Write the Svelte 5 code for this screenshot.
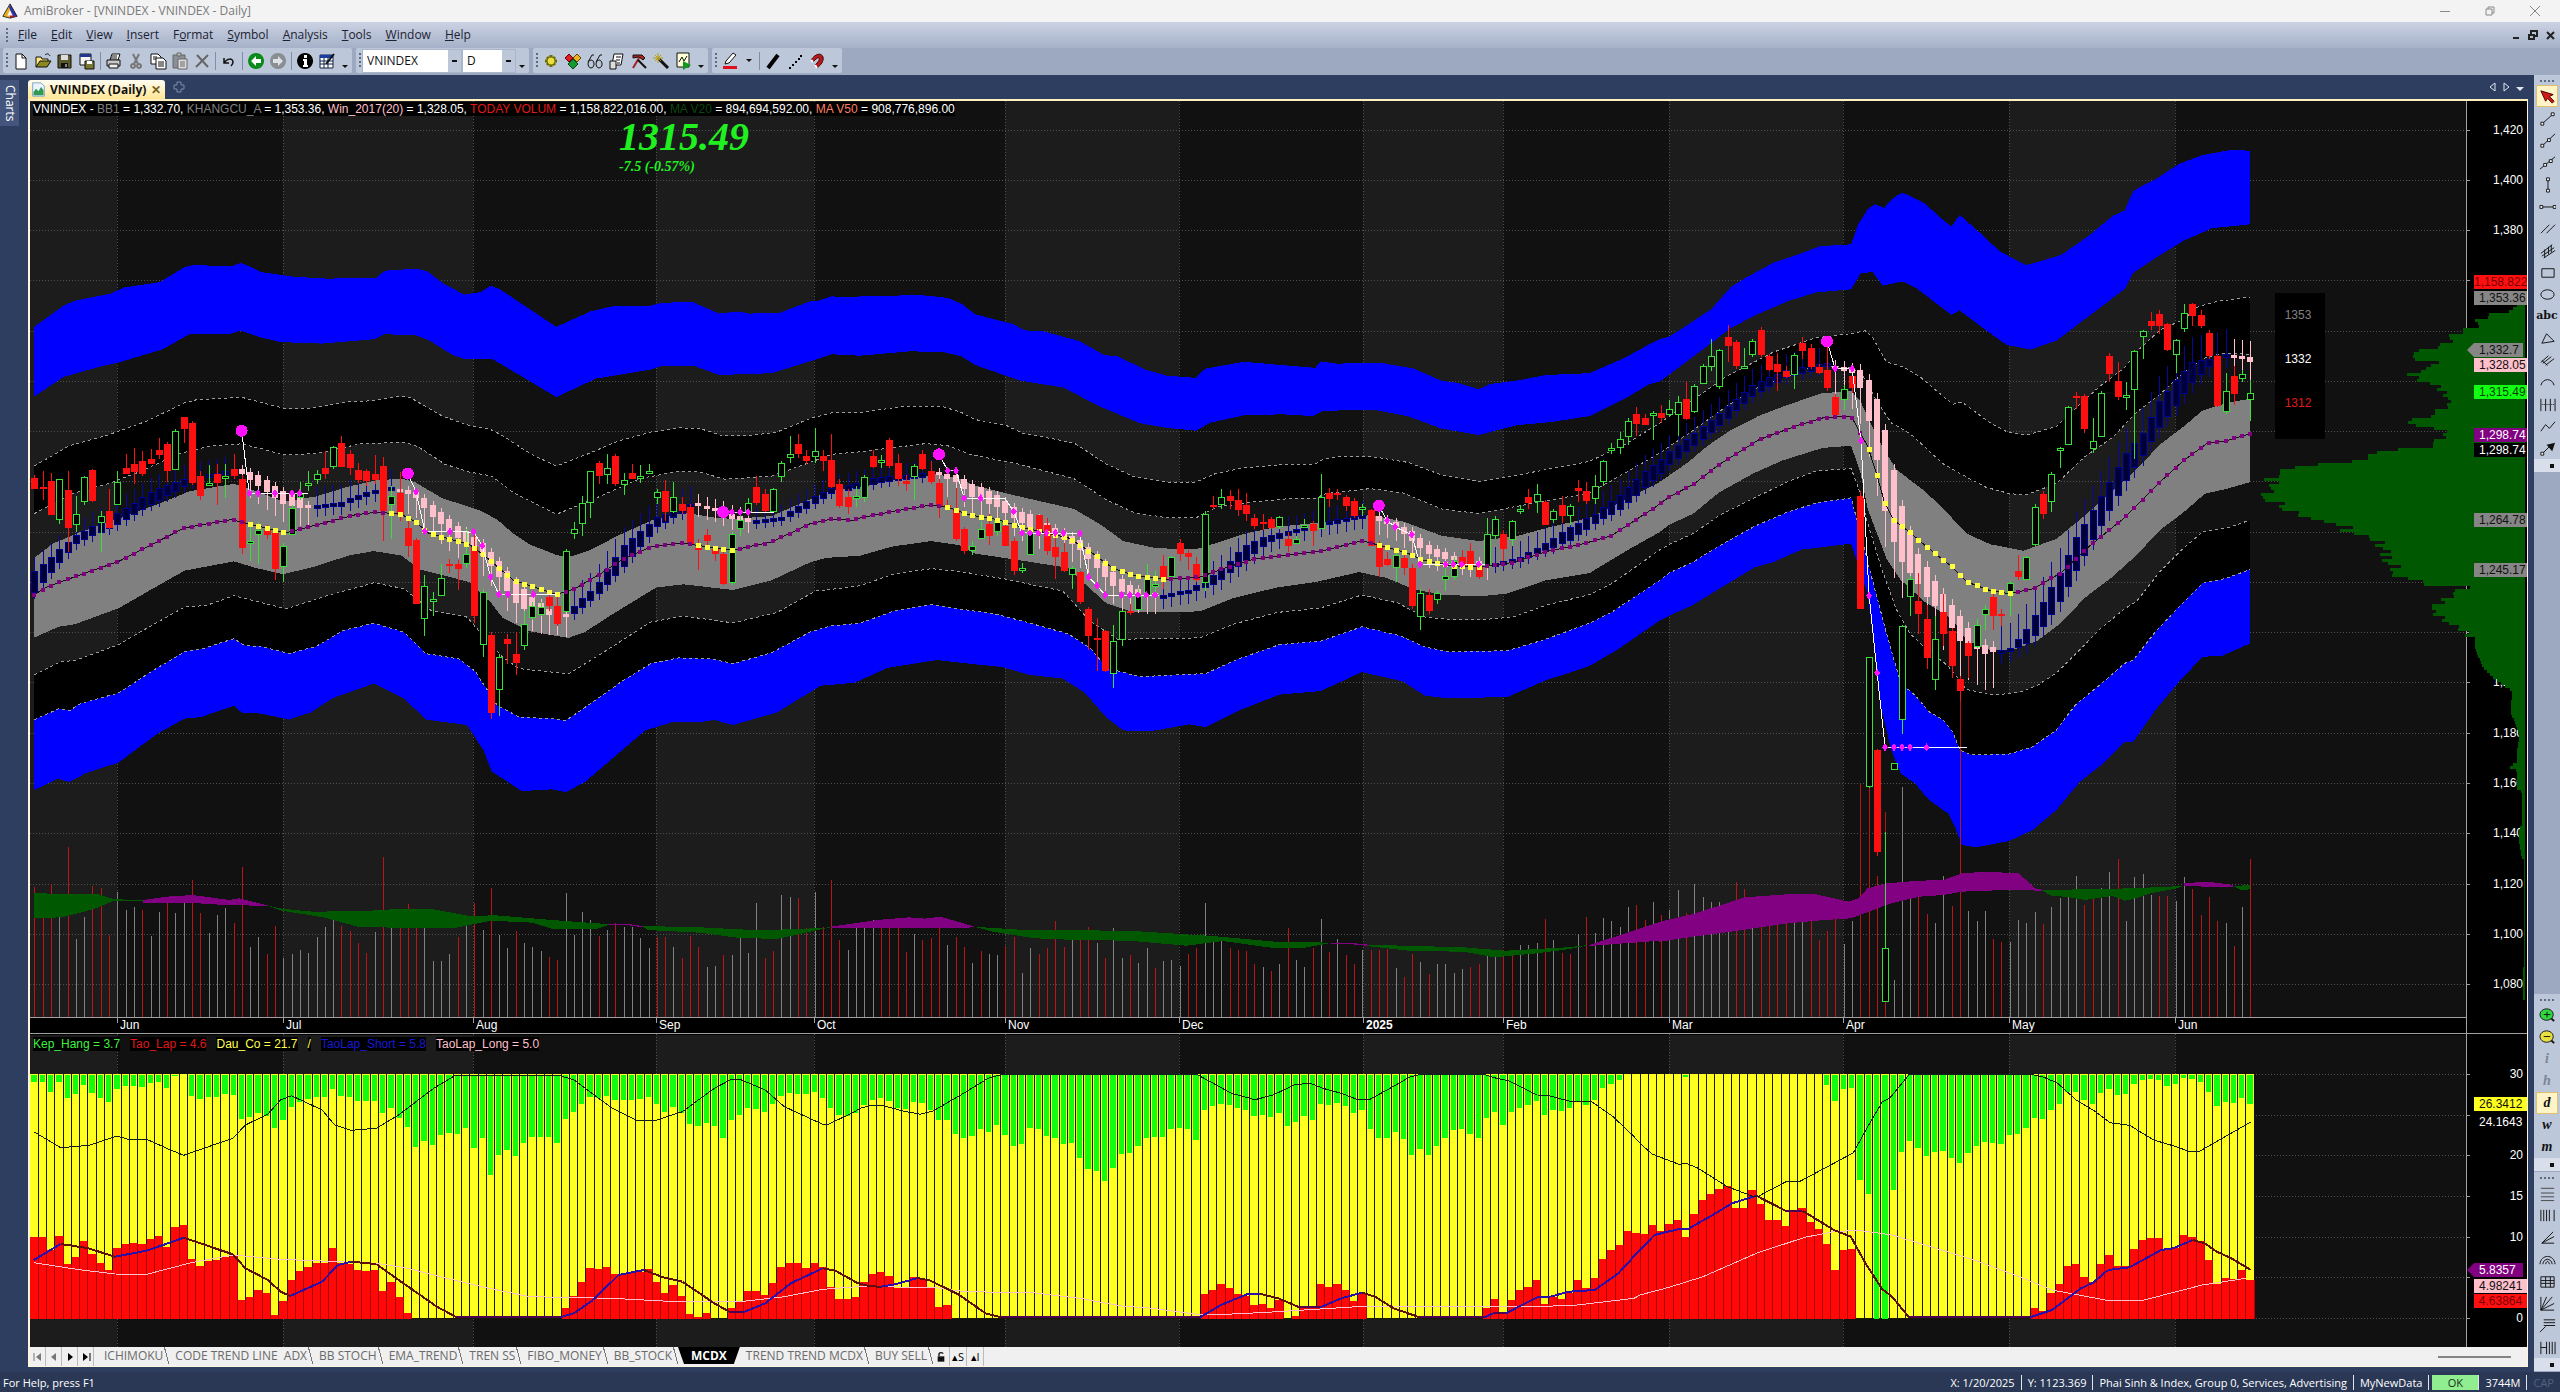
<script lang="ts">
    type Point = [number, number];
    type Shape = { d: string; f?: string; s?: string; w?: number };

    /** Recorded points come in blocks, every block with its own origin and scale. */
    function block(ox: number, oy: number, kx: number, ky: number) {
        return (text: string): Point[] =>
            text.split(' ').map((pair) => {
                const [u, v] = pair.split(',').map(Number);
                return [ox + u / kx, oy + v / ky];
            });
    }
    const west = block(20, 250, 1.8233, 2.8);
    const mid = block(860, 250, 1.8233, 2.8);
    const east = block(1660, 130, 2.119, 2.8);
    const deep = block(1660, 560, 2.119, 3);
    const volWest = block(20, 840, 0.956, 3);
    const flowWest = block(0, 1020, 1.568, 3);
    const flowMid = block(860, 1050, 1.912, 3);
    const flowEast = block(1640, 1050, 2.063, 3);
    const axisTop = block(2380, 60, 3, 2.376);
    const axisLow = block(2380, 700, 3, 2.266);

    const barX = (i: number) => 34.3 + 8.3 * i;
    const r = (n: number) => Math.round(n * 10) / 10;
    const line = (pts: Point[]) => 'M' + pts.map((p) => `${r(p[0])} ${r(p[1])}`).join('L');
    const area = (a: Point[], b: Point[]) => line([...a, ...[...b].reverse()]) + 'Z';

    function valueAt(pts: Point[], x: number) {
        if (x <= pts[0][0]) return pts[0][1];
        for (let i = 1; i < pts.length; i++) {
            const [x0, y0] = pts[i - 1];
            const [x1, y1] = pts[i];
            if (x <= x1) return x1 === x0 ? y1 : y0 + ((y1 - y0) * (x - x0)) / (x1 - x0);
        }
        return pts[pts.length - 1][1];
    }

    // price pane frame
    const LEFT = 30;
    const WIDTH = 2497;
    const TOP = 101;
    const HEIGHT = 933;
    const LOW_TOP = 1034;
    const LOW_HEIGHT = 313;
    const AXIS = 2466;
    const BASE = 1017;

    const pctX = (x: number) => ((x - LEFT) / WIDTH) * 100;
    const pctY = (y: number) => ((y - TOP) / HEIGHT) * 100;
    const pctLow = (y: number) => ((y - LOW_TOP) / LOW_HEIGHT) * 100;
    const priceY = (p: number) => 129.6 + (1420 - p) * 2.513;
    const flowY = (v: number) => 1318 - v * 8.133;

    const months = [
        { x: 117, name: 'Jun' },
        { x: 283, name: 'Jul' },
        { x: 473, name: 'Aug' },
        { x: 656, name: 'Sep' },
        { x: 814, name: 'Oct' },
        { x: 1005, name: 'Nov' },
        { x: 1179, name: 'Dec' },
        { x: 1363, name: '2025', year: true },
        { x: 1503, name: 'Feb' },
        { x: 1669, name: 'Mar' },
        { x: 1843, name: 'Apr' },
        { x: 2009, name: 'May' },
        { x: 2175, name: 'Jun' }
    ];
    const stripes = [LEFT, ...months.map((m) => m.x)].map((x, i, all) => ({
        x,
        w: (all[i + 1] ?? AXIS) - x,
        fill: i % 2 ? '#111111' : '#1c1c1c'
    }));
    const prices = Array.from({ length: 18 }, (_, i) => 1420 - 20 * i);
    const flows = [30, 25, 20, 15, 10, 5, 0];
    // the tags and the profile take the place of the labels in between
    const priceLabels = prices.filter((p) => p >= 1380 || p <= 1200);
    const flowLabels = flows.filter((v) => v !== 25 && v !== 5);

    // envelopes, from the top one down
    const blueTop = [
        ...west('26,215 80,155 100,142 165,122 190,105 255,90 300,48 315,42 385,46 403,36 425,50 440,62 500,75 560,80 650,78 665,58 725,52 745,62 770,92 810,125 840,118 858,100 875,110 978,215 1040,172 1080,158 1150,156 1170,148 1225,145 1275,178 1310,172 1330,178 1385,176 1440,144 1455,142 1480,130 1520,133'),
        ...mid('0,130 110,126 160,134 185,150 210,180 280,208 300,225 335,228 400,255 445,294 470,298 520,335 560,352 612,358 630,332 700,313 830,330 840,312 870,318 950,316 1010,332 1060,366 1090,372 1128,390 1150,375 1200,365 1250,350 1330,345 1390,305 1430,272 1458,250'),
        ...east('20,578 60,545 90,518 110,500 150,440 180,415 240,372 300,345 340,325 405,320 420,265 440,222 455,208 475,218 495,190 513,175 530,185 560,205 600,252 618,270 635,238 680,290 720,340 775,378 800,370 850,350 910,295 960,240 985,225 1003,170 1050,138 1100,95 1150,70 1210,56 1251,58')
    ];
    const blueTopIn = [
        ...west('26,410 80,355 150,325 180,315 260,278 310,235 385,234 403,226 440,245 475,258 550,262 645,250 665,236 720,238 745,252 790,295 810,305 860,305 880,322 978,412 1050,360 1150,335 1170,325 1230,325 1275,350 1370,345 1440,312 1480,292'),
        ...mid('0,296 90,284 150,285 185,298 210,322 290,365 370,385 440,440 510,485 560,498 612,506 640,483 700,463 770,460 825,465 845,450 940,448 1000,466 1060,500 1128,518 1200,490 1260,482 1330,465 1400,412 1440,375 1458,369'),
        ...east('60,645 150,555 200,520 270,480 330,455 405,446 425,402 450,397 472,436 513,424 540,440 590,490 618,518 635,505 690,560 735,602 785,615 840,590 900,530 940,490 985,445 1003,400 1060,350 1110,310 1170,275 1251,264')
    ];
    const blackTop = [
        ...west('26,605 90,548 160,518 230,480 300,428 320,420 403,412 485,445 530,443 600,425 645,422 685,410 710,412 770,465 820,492 855,500 880,520 930,570 978,605 1040,568 1090,535 1150,510 1200,498 1240,500 1280,520 1330,520 1380,510 1440,472 1480,456'),
        ...mid('0,455 80,438 150,438 185,455 210,475 265,490 295,512 390,540 450,600 500,635 560,650 612,650 650,625 700,610 780,600 830,600 845,585 880,578 940,580 1000,595 1060,630 1128,648 1200,630 1260,612 1330,592 1400,540 1458,485'),
        ...east('60,765 140,690 200,650 240,622 330,582 405,570 435,562 450,580 480,650 515,663 550,690 620,768 640,762 700,820 735,845 775,855 840,830 880,780 930,720 985,665 1010,620 1060,560 1110,530 1140,495 1180,480 1251,468')
    ];
    const blackTopIn = [
        ...west('26,738 95,682 160,655 220,620 290,570 350,548 403,543 440,556 480,574 540,570 620,543 700,538 725,550 775,600 820,622 860,633 900,680 978,740 1050,695 1130,640 1200,620 1240,622 1285,642 1370,633 1440,595 1480,572'),
        ...mid('0,565 120,542 160,548 200,572 290,600 390,640 450,700 500,735 560,750 612,750 650,720 720,705 790,695 830,695 850,682 930,668 990,680 1060,725 1128,738 1190,720 1260,700 1330,680 1400,620 1458,569'),
        ...east('60,850 140,775 200,725 270,690 330,660 405,665 430,690 460,760 490,820 530,850 600,935 640,965 690,1000 740,1018 775,1022 840,990 900,915 960,860 1010,790 1060,740 1100,690 1150,640 1190,625 1251,628')
    ];
    const grayTop = [
        ...west('26,862 60,822 110,790 180,752 250,712 310,675 390,655 440,680 480,705 540,690 600,662 650,645 695,640 720,650 770,695 840,730 870,755 900,795 930,825 980,855 1005,858 1040,840 1090,800 1150,758 1210,735 1270,750 1300,753 1370,745 1430,705 1480,672'),
        ...mid('0,665 60,645 140,628 180,640 210,660 290,690 390,725 440,770 480,815 540,835 612,838 650,820 700,795 760,775 860,760 930,742 990,760 1060,800 1128,815 1200,800 1260,775 1330,750 1400,695 1458,650'),
        ...east('60,930 100,885 150,840 210,800 270,770 340,738 405,730 425,760 460,860 500,950 560,1010 600,1060 650,1130 700,1160 770,1178 840,1145 900,1080 960,1010 1010,950 1060,880 1110,830 1150,785 1200,765 1251,752')
    ];
    const middle = [
        ...west('26,965 50,943 100,915 150,888 180,872 210,848 300,778 385,755 415,766 485,792 560,762 610,742 650,734 695,740 720,760 745,793 820,825 850,860 900,925 978,964 1010,950 1060,905 1100,865 1150,832 1205,820 1240,828 1300,840 1370,818 1440,767 1480,753 1520,757'),
        ...mid('0,750 60,732 130,714 160,720 200,742 250,755 300,778 380,806 420,845 460,890 500,912 560,922 620,916 670,888 720,865 790,853 850,840 915,814 960,832 1000,850 1030,870 1080,884 1128,888 1190,875 1250,845 1320,822 1370,800 1450,720'),
        ...east('20,1027 70,993 125,937 210,867 290,828 345,806 405,801 425,850 440,885 458,958 475,1040 495,1092 530,1127 565,1167 618,1222 650,1265 700,1290 740,1298 790,1285 850,1240 910,1165 985,1085 1060,985 1110,925 1160,877 1200,870 1251,850')
    ];
    const grayLow = [
        ...west('26,1085 70,1055 100,1048 180,1003 240,950 300,898 390,872 430,890 480,908 540,885 600,855 645,843 695,855 730,895 820,930 860,990 880,1030 930,1068 1000,1086 1030,1070 1080,1020 1160,945 1210,936 1300,952 1370,925 1440,875 1470,862'),
        ...mid('0,856 60,830 130,815 180,826 210,850 280,866 380,890 410,935 450,990 500,1015 620,1012 680,975 760,945 830,930 910,902 960,918 1010,950 1060,965 1128,970 1180,962 1250,925 1330,905 1400,840 1458,790'),
        ...east('20,1105 70,1075 125,1015 200,960 260,925 345,890 405,884 425,960 440,1060 480,1200 510,1260 560,1320 620,1370 650,1430 700,1456 750,1455 800,1430 850,1380 900,1310 960,1250 1010,1190 1060,1120 1110,1070 1155,1018 1200,1005 1251,986')
    ];
    const blackLow = [
        ...west('26,1190 75,1152 100,1150 180,1105 230,1060 300,1000 340,995 390,968 485,1005 560,968 645,932 700,948 750,1010 815,1028 850,1090 880,1140 910,1172 1000,1187 1060,1130 1150,1042 1210,1025 1300,1044 1380,1015 1450,955 1510,945'),
        ...mid('0,940 60,908 130,892 190,902 260,920 370,955 420,1040 470,1090 620,1086 680,1048 760,1015 840,1002 915,966 980,988 1030,1028 1080,1035 1128,1036 1190,1028 1250,995 1330,965 1370,935 1458,840'),
        ...east('20,1160 70,1130 125,1080 200,1030 270,985 330,955 405,948 420,1000 440,1100 470,1230 500,1340 530,1410 570,1460 610,1500 650,1567 710,1582 760,1575 800,1555 840,1520 890,1455 930,1400 985,1340 1010,1320 1060,1235 1110,1170 1150,1125 1200,1115 1251,1092')
    ];
    const blueLow = [
        ...west('26,1315 70,1285 90,1290 110,1270 180,1240 240,1180 300,1125 330,1118 390,1088 410,1108 440,1110 490,1130 540,1110 590,1065 645,1045 700,1070 740,1130 800,1145 830,1180 870,1275 910,1308 970,1312 995,1318 1040,1270 1100,1205 1150,1158 1200,1142 1260,1145 1300,1158 1370,1128 1440,1070 1480,1052'),
        ...mid('0,1045 60,1012 130,993 180,1005 250,1020 310,1045 380,1075 420,1115 450,1170 510,1195 570,1190 630,1186 690,1145 765,1105 840,1095 915,1055 985,1080 1030,1112 1075,1125 1180,1122 1250,1090 1330,1045 1370,1015 1458,925'),
        ...east('20,1240 70,1210 125,1165 200,1110 270,1070 330,1045 405,1030 425,1130'),
        ...deep('450,60 480,220 510,370 540,405 570,455 600,480 620,515 635,570 660,585 740,582 790,560 840,510 880,435 940,365 985,310 1003,300 1050,215 1100,140 1150,70 1200,55 1251,28')
    ];
    const blueLowOut = [
        ...west('26,1512 70,1480 90,1490 120,1465 180,1435 250,1355 300,1312 330,1308 390,1276 405,1296 440,1298 490,1315 530,1295 570,1255 645,1214 700,1255 740,1315 815,1330 845,1400 860,1460 915,1515 970,1510 995,1518 1030,1490 1140,1345 1190,1322 1240,1322 1265,1316 1300,1330 1380,1295 1460,1220 1520,1212'),
        ...mid('0,1205 50,1170 140,1148 210,1160 260,1168 310,1190 370,1200 410,1240 450,1310 480,1345 530,1348 600,1328 630,1336 690,1290 765,1245 840,1235 915,1182 990,1208 1030,1248 1070,1255 1180,1252 1250,1205 1330,1165 1380,1120 1458,1038'),
        ...east('20,1360 70,1330 125,1285 200,1225 240,1210 300,1175 405,1158'),
        ...deep('440,100 470,450 490,570 510,640 540,670 570,720 610,760 625,800 640,855 670,862 740,843 790,810 840,750 890,665 940,610 985,545 1003,545 1050,450 1100,365 1150,290 1190,288 1251,250')
    ];
    const dashed = [blackTop, blackTopIn, blackLow, blueLow].map(line);

    // body top, body bottom, high, low
    const candleText: [number, number, string][] = [
        [0, 250, 'r638,668,630,670 r664,670,618,700 r648,742,625,742 g642,752,640,768 r672,778,618,845 g738,766,690,790 g636,704,632,715 r616,702,612,706 g744,762,732,846 r731,778,668,782 g650,710,620,710 r610,626,572,628 r598,622,555,655 r590,626,562,632 r584,598,558,600 r560,575,526,585 r543,618,538,650 g508,614,502,614 r468,500,468,540 r484,652,480,658 r632,688,620,700 g652,655,602,660 r626,652,600,715 g633,636,600,695 r612,632,572,640 r640,834,630,850 g815,818,762,870 g783,795,762,880 r784,798,770,810 r792,894,780,925 g828,885,820,930 g722,796,715,798 g683,692,650,700 g652,656,620,676 g628,640,615,655 r610,626,562,640 g552,606,550,612 r540,608,522,608 r570,610,560,630 r616,644,595,652 r620,646,612,660 r626,644,575,656 r605,730,580,815 g690,710,660,808 r680,742,622,760 r778,828,760,860 r812,990,806,990 g942,1030,910,1080 g978,984,958,1026 g918,966,880,970 r878,882,865,905 r880,894,868,952 g852,875,780,890 r832,1024,790,1044 g958,1102,950,1140 r1078,1296,1070,1312 g1140,1230,1130,1305 r1090,1102,1075,1160 r1130,1156,1070,1190 g1048,1105,1010,1120 g998,1028,985,1036 g1000,1020,985,1025 r972,996,960,1010 r996,1046,960,1052 g842,1010,838,1012 g780,792,762,810 g708,765,690,800 g620,706,618,750 r596,634,590,655 g610,628,570,655 r578,654,572,660 g644,655,625,685 r624,640,600,640 g633,636,602,652 g620,623,600,628 g678,692,668,712 r674,734,645,760 g692,732,650,735 r712,730,692,740 r720,824,712,830 r834,838,810,895 r798,816,780,825 r838,850,830,870 r852,936,845,938 g796,930,790,938 g756,778,730,800 g708,730,695,742 r664,708,632,715 r684,732,668,735 g670,732,665,735 g596,634,590,650 g570,580,520,595 r543,572,515,582 r578,592,560,600 g564,576,498,596 r578,592,560,620 r588,664,515,665 r655,716,642,722 r692,720,670,740 g690,694,660,720'],
        [100, 250, 'g636,692,630,705 r578,608,560,610 g588,594,575,610 r532,606,526,610 r596,642,570,660 r648,654,630,675 g604,632,600,700 r572,612,560,616 r620,650,590,655 r652,716,640,750 r714,720,700,725 r728,808,665,815 r782,842,775,850 g830,840,815,855 g780,805,760,805 r768,800,740,825 g758,788,750,800 r774,828,762,830 r814,898,805,910 g890,896,875,905 g786,850,780,855 r742,786,742,800 r770,842,750,855 r832,860,800,920 r846,898,820,902 g890,908,885,950 r902,986,898,990 r1004,1082,1000,1120 r1085,1090,1030,1180 r1068,1178,1065,1182 g1096,1185,1050,1225 g1012,1090,1008,1110 r1010,1016,990,1022 g968,1005,950,1008 g922,965,880,968 g935,938,900,960 r886,920,855,950 g860,912,856,915 r820,852,808,870 r848,860,840,895 r880,925,860,930 g738,930,730,955 r714,718,690,725 g692,710,668,725 r690,704,672,725 r700,728,670,745 r714,738,680,760 r750,774,740,780 r762,765,738,785 r753,778,748,780 g748,772,744,780 r810,828,790,845 g810,820,800,822 g770,774,752,778 r768,788,760,830 g692,778,628,782 r680,698,665,720 r680,684,668,700 r692,716,685,730 r702,745,695,750 g720,725,710,745 r728,828,725,830 r825,888,815,915 r866,882,845,885 g855,888,840,930 r862,890,850,910 r890,998,880,1005 g960,1026,950,1064 r966,1010,950,1020 g960,978,955,990 g912,920,890,955 g870,912,860,925 r860,885,840,890 r842,886,820,890 r888,916,870,920 g794,885,750,888 g752,798,745,808 r795,838,785,870 g758,808,755,830 g724,730,715,740 r692,708,670,725 g683,704,655,735 r706,770,700,770 g732,752,725,765 r714,745,690,765 g718,742,710,770 r666,676,645,705 r674,702,650,710 g660,695,630,710 g590,648,588,660 g555,560,540,570 g530,552,510,570 g478,520,470,545 r460,488,440,520 r470,490,460,490 g456,460,450,532 r457,470,435,485 g444,460,420,465 g426,460,410,520 r418,474,370,475 g382,452,375,455 g326,372,320,375 g296,326,250,340'],
        [203, 130, 'g616,716,614,726 r580,606,545,650 r594,660,588,668 g660,664,610,670 g590,626,585,635 r560,630,552,635 r632,672,628,676 r656,678,625,732 r674,692,660,695 g630,682,625,725 r596,620,580,640 r610,664,600,668 r664,680,655,682 r672,722,600,730 r748,798,740,805 g724,754,715,785 r690,722,680,735 r1026,1340,1010,1342 g1475,1837,1475,1843 r1736,2022,1734,2033 g2290,2438,1965,2440 g1771,1788,1771,1788 g1390,1648,1385,1690 g1256,1306,1250,1362 r1320,1354,1240,1410 r1370,1477,1330,1510 g1426,1536,1360,1568 r1350,1412,1300,1445 r1402,1501,1395,1535 r1538,1570,1530,1600 r1436,1474,1430,1535 g1385,1445,1370,1450 g1342,1356,1330,1400 r1308,1360,1295,1400 r1355,1362,1340,1390 g1268,1298,1262,1360 r1236,1252,1190,1260 g1196,1256,1192,1260 g1056,1158,1048,1165 r1020,1075,1012,1090 g962,1038,958,1070 g890,896,888,945 g776,878,774,882 r745,750,734,780 r744,836,738,848 g872,890,805,905 g736,856,730,860 r632,684,624,705 r703,748,650,755 g743,747,705,785 g618,726,615,920 g564,578,560,640 r536,550,510,560 r515,550,505,570 r543,616,540,620 g588,628,585,680 g513,555,488,565 r488,522,485,550 r518,550,505,555 r568,634,560,640 r634,772,630,775 g732,788,680,795 r690,738,660,770 g684,695,672,705 g735,752,700,815']
    ];
    const candles = candleText.flatMap(([start, oy, text]) =>
        text.split(' ').map((item, k) => {
            const [top, bottom, high, low] = item.slice(1).split(',').map((v) => Math.round(oy + Number(v) / 2.8));
            return { x: Math.round(barX(start + k)), up: item[0] === 'g', top, bottom: Math.max(bottom, top + 2), high, low };
        })
    );

    // trend candles: tone, reach of the wicks, body top, body bottom
    const trends: [string, number, number, Point[], Point[]][] = [
        ['navy', 14, 7, west('26,900 100,800 180,735 240,675 300,640 390,615'), west('26,958 100,822 180,765 240,710 300,660 330,640 390,622')],
        ['pink', 4, 18, west('404,614 435,630 480,675 510,690 525,715'), west('404,626 435,660 480,712 510,722 525,722')],
        ['navy', 18, 9, west('538,716 585,705 640,672 680,664'), west('538,720 585,716 640,684 680,668')],
        ['pink', 4, 20, west('690,668 720,675 750,710 800,775 840,815 870,865 900,920 940,980 970,1010 1000,1020'), west('690,672 720,690 750,745 800,808 840,850 870,905 900,985 920,1005 950,1020 1000,1024')],
        ['navy', 18, 7, west('1006,1002 1050,940 1100,828 1160,748 1225,708'), west('1006,1022 1050,968 1100,885 1160,775 1225,720')],
        ['pink', 9, 11, west('1234,708 1275,725 1300,740 1330,750'), west('1234,713 1275,735 1300,755 1330,762')],
        ['navy', 12, 6, [...west('1340,755 1385,750 1430,705 1480,665 1520,655'), ...mid('22,640 60,632 130,622')], [...west('1340,758 1385,756 1430,725 1480,680 1520,668'), ...mid('22,655 60,645 130,632')]],
        ['pink', 4, 18, mid('142,622 180,632 205,655 250,685 290,730 320,745 370,790 400,810 440,865 470,915 500,945 545,965'), mid('142,628 180,655 205,692 250,720 290,760 330,790 370,808 400,838 440,905 470,955 500,965 545,970')],
        ['navy', 14, 11, mid('550,968 600,950 650,905 700,830 740,800 790,782 850,760 920,740'), mid('550,970 600,960 650,930 700,872 740,820 790,792 850,770 920,748')],
        ['pink', 4, 14, mid('940,742 980,765 1010,790 1040,830 1080,855 1144,878'), mid('940,755 980,778 1010,820 1040,855 1080,868 1144,882')],
        ['navy', 16, 7, [...mid('1155,878 1200,862 1240,828 1290,780 1340,738 1390,680 1430,620 1458,590'), ...east('20,900 100,820 200,710 270,670 360,650')], [...mid('1155,880 1200,872 1240,845 1290,815 1340,765 1390,720 1430,665 1458,628'), ...east('20,935 100,855 200,740 270,690 360,660')]],
        ['pink', 6, 36, east('368,660 407,668 425,672 442,700 460,755 477,840 495,952 512,1052 530,1125 547,1185 565,1222 600,1300 635,1360 653,1395 688,1442 710,1450'), east('368,668 407,680 425,724 442,815 460,925 477,1065 495,1155 512,1210 530,1240 547,1270 565,1308 600,1355 635,1432 653,1438 688,1466 710,1462')],
        ['navy', 25, 11, east('720,1456 741,1450 776,1398 811,1322 846,1242 881,1142 917,1065 952,985 987,905 1022,850 1057,760 1093,700 1128,650 1163,640 1200,628'), east('720,1458 741,1458 776,1438 811,1390 846,1320 881,1235 917,1145 952,1065 987,980 1022,910 1057,832 1093,770 1128,705 1163,660 1200,635')],
        ['pink', 16, 18, east('1212,628 1256,636'), east('1212,634 1256,650')]
    ];
    const trendBars = trends.flatMap(([tone, up, down, a, b]) =>
        Array.from({ length: 268 }, (_, i) => barX(i))
            .filter((x) => x >= a[0][0] - 2 && x <= a[a.length - 1][0] + 2)
            .map((x) => {
                const top = Math.round(valueAt(a, x));
                return { tone, x: Math.round(x), top, h: Math.max(3, Math.round(valueAt(b, x)) - top), up, down };
            })
    );

    const warm = [[247, 287], [388, 560], [698, 735], [946, 1165], [1377, 1486], [1867, 2011]];
    const dots = Array.from({ length: 268 }, (_, i) => {
        const x = barX(i);
        const hot = warm.some(([a, b]) => x >= a && x <= b);
        return { x: Math.round(x), y: Math.round(valueAt(middle, x)), fill: hot ? '#ffff40' : '#800080', size: hot ? 5 : 4 };
    });

    const stops = [
        west('404,506 418,681 525,681'),
        west('707,626 722,677 738,788 827,790 843,828 858,915 873,964 978,964'),
        west('1282,734 1375,734'),
        mid('144,572 160,618 175,618 190,695 265,697 280,732 295,792 400,794 417,916 432,940 447,966 545,967'),
        mid('946,716 961,757 976,776 1006,797 1021,880 1140,880'),
        [...east('354,592 371,668 407,668 426,870 443,1304 460,1520'), ...deep('477,562 651,562')]
    ];
    const gems = [
        ...west('418,681 434,681 465,681 496,681 510,681 722,677 738,788 784,789 827,789 843,828 858,915 873,964 890,964 936,964 1298,734 1313,734 1328,734'),
        ...mid('160,618 175,618 190,695 220,695 280,732 295,792 310,792 325,792 340,792 356,792 371,792 401,794 417,916 432,940 447,966 477,966 492,966 507,966 522,966 538,966 961,757 976,776 1006,797 1021,880 1068,880 1082,880 1097,880 1128,880'),
        ...east('371,668 407,668 426,870 443,1304 460,1520'),
        ...deep('477,562 496,562 513,562 530,562 565,562')
    ];

    const volumeText: [number, number, string][] = [
        [0, 840, 'r140 r190 r132 g205 r22 g298 g230 r138 r145 r285 g155 g210 g202 r210 g288 g215 r180 g218 g190 r120 r218 g278 g225 g205 r250 r82 g320 g292 r342 r258 g355 g343 g330 g340 g292 g262 g222 r258 r272 r310 r340 g275 r52 g265 r240 r192 r260 g265 g362 g362 g342 r290 g258 r190 g270 r145 g285 g325 r272 g308 g320 g333 r350 r360 g158 g285 g215 g240 r288 g270 r250 g262 g262 g295 g325 r292 r290 g322 r355 r288 r320 g380 g378 r345 g345 g290 g338 g188 r355 r332 g165 g172 r175 r265 g155 r260 r120 r300 g330 g265 g265 g240 r265 r262 r262 r335 g282 r300 r295 r230 g315 r292 r320 g368 r332 g342 g345 r318 r290 g398 g325 r342 r325 r242 r322 g292 r300 r260 g308 r355 g265 g355 r345 g368 g325 r385 g362 g360 g378 r342 r325 g188 g288 g295 r325 r330 r332 r372 g380 r392 g372 r265 g360 g380 r325 g238 r335 g297 r345 r372 g330 r330 r330 r328 g385 r412 r342 g365 r402 g372 g372 g398 g388 r382 r372 g330 g330 r330 r345 g315 g315 g308 r237 g300 r340 r342 g282 r230 g278 g235 g242 g262 g200 r195 r240 g185'],
        [196, 560, 'r1066 g1050 g990 r1060 g972 g1010 g1025 g1025 g1028 r966 r988 g1030 r1045 r1033 r1035 r1080 g1050 g1038 r1075 r1140 r1112 r1056 g1152 g1083 r672 r685 r948 r755 g1260 g680 g963 r962 r1062 g1088 g948 r1038 r390 g1053 g1082 g1053 r1138 r1146 g1145 g1080 g1088 g1056 r1092 g1040 g1015 g1012 g948 r1035 r1010 g985 g937 r898 g1084 g950 g942 g1005 r1008 r1007 g1023 g950 r988 r1065 r1012 r1082 g1090 r1158 g1040 r897']
    ];
    const volume = volumeText.flatMap(([start, oy, text]) =>
        text.split(' ').map((item, k) => ({
            x: Math.round(barX(start + k)),
            y: Math.round(oy + Number(item.slice(1)) / 3),
            fill: item[0] === 'r' ? '#b81616' : '#808080'
        }))
    );

    const ribbons: [string, string][] = [
        ['#005800', line(volWest('13,160 75,163 90,178 118,180 118,184 90,182 70,208 40,232 13,235')) + 'Z'],
        ['#820082', line(volWest('118,180 140,170 165,165 200,180 210,175 235,195 250,207 235,197 200,196 170,190 118,188')) + 'Z'],
        ['#005800', line(volWest('235,195 250,206 280,215 330,213 360,207 395,208 430,228 455,226 500,238 530,245 565,253 550,268 510,268 490,248 450,242 415,264 325,262 290,232 250,212')) + 'Z'],
        ['#820082', line(volWest('563,251 580,251 600,260 600,264 580,255 563,255')) + 'Z'],
        ['#005800', line(volWest('595,258 650,262 700,270 740,268 775,262 760,272 725,296 690,295 650,278 600,270')) + 'Z'],
        ['#820082', line(volWest('775,260 820,240 850,232 865,236 880,230 915,262 880,265 775,264')) + 'Z'],
        ['#005800', line(volWest('912,260 960,270 1060,272 1110,282 1140,288 1200,305 1255,308 1225,325 1200,325 1150,303 1115,317 1060,302 1010,300 970,295 930,275')) + 'Z'],
        ['#820082', line(volWest('1253,308 1270,308 1292,315 1292,319 1270,312 1253,312')) + 'Z'],
        ['#005800', line(volWest('1288,314 1380,322 1420,332 1480,322 1502,314 1480,328 1450,340 1410,352 1380,335 1330,333 1290,319')) + 'Z'],
        ['#820082', area([...volWest('1500,315 1540,275 1564,250'), ...deep('0,1085 70,1062 130,1035 180,1012 270,1003 330,1003 400,1025 420,1015 440,985 480,970 550,962 600,960 640,940 690,935 760,940 795,985 812,990')], [...volWest('1500,318 1564,303'), ...deep('0,1145 70,1130 150,1115 270,1090 350,1080 405,1075 480,1035 490,1030 550,1010 600,1005 640,995 690,992 740,990 812,992')])],
        ['#005800', line(deep('808,990 900,988 1000,985 1110,978 1095,985 1040,1000 1000,1018 985,1022 960,1008 900,1020 860,1010 830,1008')) + 'Z'],
        ['#820082', line(deep('1110,970 1160,965 1215,975 1215,980 1160,980 1110,978')) + 'Z'],
        ['#005800', line(deep('1215,978 1251,975 1251,988 1230,990')) + 'Z']
    ];

    // volume-by-price outline, stepped into thin rows
    const profileEdge = [
        ...axisTop('430,580 385,590 320,605 290,625 250,640 215,655 185,675 120,690 75,700 125,710 190,718 100,738 90,744 120,755 150,765 190,785 215,797 190,805 210,815 170,835 75,858 150,868 200,885 180,900 140,915 30,925'),
        ...east('1560,890 1490,903 1530,910 1420,930 1340,940 1310,960 1285,975 1310,985 1268,1028 1330,1040 1300,1050 1345,1065 1400,1095 1470,1105 1450,1115 1480,1130 1530,1150'),
        ...axisTop('0,1155 20,1160 5,1175 35,1180 15,1190 45,1200 30,1215 90,1230 150,1245 265,1250 215,1265 190,1280 180,1290 145,1305 170,1315 210,1330 205,1338 245,1350 285,1370 285,1395 310,1440 340,1465 375,1485 395,1495 395,1515'),
        ...axisLow('393,0 393,25 405,50 418,80 412,110 410,138 385,148 412,158 412,200 425,205 425,280 417,290 417,320 425,350 432,360 430,680')
    ];
    const edgeByY = profileEdge.map(([x, y]): Point => [y, x]);
    const profile = Array.from({ length: 235 }, (_, k) => {
        const y = 304 + k * 3;
        const x = valueAt(edgeByY, y);
        const jut = y < 640 ? ((k * 7) % 5) * 3 - 6 : 0;
        return { x: Math.round(x + jut), y };
    }).filter((row) => row.y < 1000);

    // money flow: bottom of the green column, top of the red one
    const flowText: [number, number, string][] = [
        [0, 0, '185,652 185,652 215,690 185,648 233,732 222,712 195,664 218,702 233,730 247,750 206,684 198,672 198,670 202,672 190,657 186,648 203,680 168,622 166,615 228,718 238,738 231,722 230,720 221,710 225,708 298,840 292,832 280,810 287,820 323,884 300,844 262,780 245,754 237,742 230,730 231,728 206,684 228,730 232,732 242,750 243,752 243,750 278,812 264,785 293,832 320,880 380 362 375 346 338 342 323 383 355 464 405 390 407 370 352 350 350 368 297,865 275,828 253,787 230,744 233,747 228,740 240,762 240,762 240,758 238,755 231,748 252,787 275,820 260,795 278,827 311,882 318,892 308,878 318 353 299,865 285,845 265,812 266,812 275,825 253,790 228,742 218,728 221,730 223,745 217,728 233,742 264,800 284,838 288,838 280,832'],
        [100, 91, '165,695 150,672 143,664 152,676 173,712 175,712 155,680 158,685 178,712 210,770 210,765 250 262 258 235 245 225 255 288 282 232 235 257 262 282 278 322 355 362 392 352 310 308 288 262 260 260 236 232 235 268 178,732 167,720 160,700 165,712 173,732 180,738 197,765 193,760 200,772 187,748 227 216,798 198,770 208,770 160,702 165,710 157,700 168,718 188,752 180,730 235 262 262 245 265 315 295 315 288 264 240 237 250 263 202,773 184,745 225,792 186,748 172,720 164,710 153,690 195,760 178,740 182,745 172,728 155,690 163,712 148,682 113,625 101,600 90,583 72,541 72,549 72,552 72,525 72,543 72,522 72,508 80,561 72,490 72,450 72,430 72,417 72,408 72,472 72,472 72,420 72,460 72,508 72,510 72,528 72,480 72,472 72,516 75,535 104,582 153,660 115,598 113,595 390 430 805 805 418 305 272 293 318 305 303 322 337 308 288 275 278 282 255 252 233 202,773 205,783 178,728 160,700 125,648 125,640 150,680 160,695 128,640 115,615 135,648 132,648 100,595 88,570 86,564 88,564 106,600 102,592 82,555 85,560 96,572 125,628 167,702 155,684 157,685 143,660 160,690']
    ];
    const columns = flowText.flatMap(([start, shift, text]) =>
        text.split(' ').map((item, k) => {
            const [g, red = 896 - shift] = item.split(',').map(Number);
            const x = Math.round(barX(start + k));
            return {
                x,
                w: Math.round(barX(start + k + 1)) - x,
                green: Math.round(1020 + (g + shift) / 3),
                red: Math.round(1020 + (red + shift) / 3)
            };
        })
    );

    const retail = line([
        ...flowWest('53,335 95,383 140,376 183,348 205,360 230,358 265,388 288,406 365,355 385,315 420,282 440,240 457,227 505,270 525,315 550,331 590,325 625,285 680,205 715,165 875,165 900,180 960,265 1000,303 1030,300 1070,275 1120,205 1145,180 1160,178 1200,210 1230,260 1290,313 1300,312 1340,275'),
        ...flowMid('0,175 20,167 45,167 80,182 115,193 140,183 200,128 245,85 270,74 645,74 670,95 710,130 755,149 790,135 830,105 860,99 885,115 920,130 950,148 975,148 1010,118 1050,82 1070,74 1195,74 1215,84 1240,92 1295,135 1315,136 1355,153 1400,156 1440,200 1480,260'),
        ...flowEast('0,280 25,312 80,343 95,340 120,355 180,410 235,440 245,438 300,396 330,394 400,340 440,308 470,230 500,155 515,145 555,74 810,74 830,80 860,98 900,150 940,185 970,218 1010,226 1060,270 1110,292 1130,303 1155,303 1195,270 1260,216')
    ]);
    const shortPts = [
        ...flowWest('53,720 95,672 137,684 180,710 230,692 288,653 365,703 385,745 420,780 440,815 455,828 505,785 530,735 550,725 590,732 625,780 685,860 715,891 880,891 900,880 930,840 970,765 1010,750 1040,772 1070,785 1120,850 1145,877 1165,877 1200,850 1240,790 1290,745 1310,752 1345,790'),
        ...flowMid('20,709 40,710 70,702 110,684 135,692 190,735 240,790 270,802 650,802 690,765 740,733 765,731 800,745 840,772 880,772 920,745 960,728 985,740 1020,775 1070,802 1195,802 1210,790 1235,790 1295,742 1320,740 1355,725 1405,720 1450,670 1485,610'),
        ...flowEast('0,600 30,555 80,537 100,536 150,495 190,460 240,437 300,482 335,482 400,540 435,560 465,640 500,718 520,740 555,802 805,802 850,780 910,715 935,698 965,660 1010,652 1075,600 1100,595 1140,570 1165,580 1190,605 1220,625 1260,660')
    ];
    const shortLines = shortPts.slice(1).map((p, i) => {
        const rise = shortPts[i][1] - p[1];
        return { d: line([shortPts[i], p]), stroke: rise > 0 ? '#2a10a8' : rise < 0 ? '#5c1010' : '#500050' };
    });
    const longLine = line([
        ...flowWest('53,728 120,748 180,762 230,763 300,728 365,705 440,718 590,730 640,745 700,775 760,802 830,830 960,835 1040,843 1170,843 1230,830 1290,808 1345,800'),
        ...flowMid('10,710 140,712 200,725 330,728 420,745 500,768 560,775 640,792 670,795 780,787 950,770 1250,770 1360,767 1480,745'),
        ...flowEast('0,735 60,712 130,680 240,610 340,562 400,545 450,541 520,555 600,590 700,635 800,690 850,720 960,750 1040,750 1080,735 1160,705 1250,685')
    ]);

    const tags = [
        { y: 282, text: '1,158.822', cls: 'red' },
        { y: 298, text: '1,353.36', cls: 'gray' },
        { y: 350, text: '1,332.7', cls: 'gray arrow' },
        { y: 365, text: '1,328.05', cls: 'rose' },
        { y: 392, text: '1,315.49', cls: 'lime' },
        { y: 435, text: '1,298.74', cls: 'purple' },
        { y: 450, text: '1,298.74', cls: 'black' },
        { y: 520, text: '1,264.78', cls: 'gray' },
        { y: 570, text: '1,245.17', cls: 'gray' }
    ];
    const lowTags = [
        { y: 1104, text: '26.3412', cls: 'yellow' },
        { y: 1122, text: '24.1643', cls: 'black' },
        { y: 1270, text: '5.8357', cls: 'purple arrow' },
        { y: 1286, text: '4.98241', cls: 'rose' },
        { y: 1301, text: '4.63864', cls: 'red' }
    ];

    const K = '#111';
    const icons: Record<string, Shape[]> = {
        new: [{ d: 'M4 2h6l4 4v11H4z', f: '#fff', s: K }, { d: 'M10 2v4h4', s: K }],
        open: [{ d: 'M2 15V5h5l1 2h6v3', f: '#ffe680', s: K }, { d: 'M2 15l4-6h11l-4 6z', f: '#8a8a20', s: K }, { d: 'M11 3c2-2 4-1 5 1', s: K }],
        save: [{ d: 'M2 3h13v13H2z', f: '#5a5a2a', s: K }, { d: 'M5 3h7v5H5z', f: '#ddd' }, { d: 'M5 11h7v5H5z', f: K }, { d: 'M10 12v3', s: '#fff' }],
        saveall: [{ d: 'M2 2h11v11H2z', f: '#f4f4f4', s: K }, { d: 'M2 2h11v3H2z', f: '#22368c' }, { d: 'M7 9h9v8H7z', f: '#777733', s: K }, { d: 'M9 9h5v3H9z', f: '#fff' }],
        print: [{ d: 'M5 8l2-6h8l-2 6z', f: '#fff', s: K }, { d: 'M2 8h13v6H2z', f: '#c9c9c9', s: K }, { d: 'M4 12h9v4H4zM7 4h5M6 6h6', f: '#eee', s: K }],
        cut: [{ d: 'M6 2l5 10M12 2L7 12', s: '#777', w: 2 }, { d: 'M6 12a2 2 0 1 0 .1 0zM12 12a2 2 0 1 0 .1 0z', s: '#777', w: 2 }],
        copy: [{ d: 'M2 2h7l3 3v7H2z', f: '#fff', s: K }, { d: 'M7 6h7l3 3v8H7zM9 10h6M9 12h6M9 14h6M4 5h4M4 7h3', f: '#fff', s: K }],
        paste: [{ d: 'M2 3h12v13H2z', f: '#8b8f96', s: '#666' }, { d: 'M6 1h4v3H6z', f: '#bbb', s: '#666' }, { d: 'M7 7h9v10H7zM9 10h5M9 12h5M9 14h5', f: '#ddd', s: '#666' }],
        del: [{ d: 'M4 3l11 12M15 3L3 15', s: '#666', w: 2 }],
        undo: [{ d: 'M4 6v5h5M4 11c3-5 9-5 9-1 0 2-1 3-2 4', s: K, w: 1.5 }],
        back: [{ d: 'M9 1a8 8 0 1 0 .1 0z', f: '#0a8a1a' }, { d: 'M9 4L4 9l5 5v-3h5V7H9z', f: '#fff' }],
        fwd: [{ d: 'M9 1a8 8 0 1 0 .1 0z', f: '#8a8d92' }, { d: 'M9 4l5 5-5 5v-3H4V7h5z', f: '#dde1e8' }],
        info: [{ d: 'M9 1a8 8 0 1 0 .1 0z', f: '#000' }, { d: 'M8 3h3v3H8zM7 7h4v6h1v2H7v-2h1V9H7z', f: '#fff' }],
        sheet: [{ d: 'M2 3h13v13H2z', f: '#fff', s: '#124' }, { d: 'M2 3h13v3H2z', f: '#1a3da0' }, { d: 'M2 9h13M2 12h13M6 6v10M10 6v10', s: '#124' }, { d: 'M8 12l8-10', s: K, w: 2 }],
        gear: [{ d: 'M9 3v12M3 9h12M5 5l8 8M13 5l-8 8', s: '#6b6b00', w: 3 }, { d: 'M9 5a4 4 0 1 0 .1 0z', f: '#e8e040', s: '#6b6b00' }],
        gems: [{ d: 'M5 2l4 4-4 4-4-4z', f: '#e02020', s: '#600' }, { d: 'M13 2l4 4-4 4-4-4z', f: '#e8b020', s: '#640' }, { d: 'M9 7l5 5-5 5-5-5z', f: '#159a30', s: '#042' }],
        glasses: [{ d: 'M5 8a3 4 0 1 0 .1 0zM13 8a3 4 0 1 0 .1 0zM2 10l4-7h2M10 10l4-7h2', s: K }],
        script: [{ d: 'M6 2h9l-2 11H4z', f: '#fff', s: K }, { d: 'M2 9h6v8H2z', f: '#ddd', s: K }, { d: 'M8 5h5M8 8h4M9 11h3', s: K }],
        hammer: [{ d: 'M3 3h9l3 3-2 2-4-3-6 1z', f: '#b02020', s: K }, { d: 'M9 6l-6 10', s: '#a02020', w: 2 }, { d: 'M8 8l8 8', s: K, w: 2 }],
        wand: [{ d: 'M7 7l9 9', s: K, w: 3 }, { d: 'M6 1v10M1 6h10M3 3l6 6M9 3L3 9', s: '#b89c00' }],
        report: [{ d: 'M3 1h12v14H3z', f: '#ffffd8', s: K }, { d: 'M5 10l3-5 2 4 3-5', s: K }, { d: 'M9 9l8 4-8 5z', f: '#109a20' }],
        pen: [{ d: 'M5 9l7-8 3 2-7 8-4 1z', f: '#fff', s: K }, { d: 'M2 14h14v3H2z', f: '#e01020' }],
        stroke: [{ d: 'M4 16L14 3', s: '#000', w: 4 }],
        dotted: [{ d: 'M3 15h2v2H3zM6 12h2v2H6zM9 9h2v2H9zM12 6h2v2h-2zM14 3h2v2h-2z', f: '#000' }],
        magnet: [{ d: 'M3 8c4-6 10-8 12-3 1 4-2 8-6 11l-2-3c3-3 5-5 4-7-1-1-3 1-6 4z', f: '#b81818', s: '#400' }, { d: 'M7 13l2 3M3 8l2 2', s: '#fff', w: 2 }],
        cursor: [{ d: 'M2 3l13 4-4 2 5 5-2 2-5-5-2 3z', f: '#d01818', s: '#400' }],
        seg: [{ d: 'M4 14L14 5', s: K }, { d: 'M2 13h3v3H2zM13 3h3v3h-3z', f: '#fff', s: K }],
        ray: [{ d: 'M3 15L17 2', s: K }, { d: 'M2 13h3v3H2zM9 7h3v3H9z', f: '#fff', s: K }],
        ext: [{ d: 'M1 16L17 3', s: K }, { d: 'M5 10h3v3H5zM11 6h3v3h-3z', f: '#fff', s: K }],
        vert: [{ d: 'M9.500 3v12', s: K }, { d: 'M8 2h3v3H8zM8 14h3v3H8z', f: '#fff', s: K }],
        horiz: [{ d: 'M3 9.500h12', s: K }, { d: 'M1 8h3v3H1zM15 8h3v3h-3z', f: '#fff', s: K }],
        para: [{ d: 'M2 14l9-9M8 14l9-9', s: K }],
        chan: [{ d: 'M2 12l12-9M3 15l13-9M5 17l12-8M6 8v8M10 5v8M13 3v8', s: K }],
        rect: [{ d: 'M3 5h13v9H3z', s: K }],
        oval: [{ d: 'M2 9a7 5 0 1 0 14 0a7 5 0 1 0-14 0z', s: K }],
        tri: [{ d: 'M3 14L8 4l8 8z', s: K }],
        fork: [{ d: 'M2 11l8-7M4 12l9-7M7 14l9-7M3 9l6 5', s: K }],
        arc: [{ d: 'M2 12c2-8 12-8 14 0', s: K }],
        cycle: [{ d: 'M2 3v13M7 3v13M12 3v13M17 3v13', s: K }, { d: 'M3 9h1M5 9h1M8 9h1M10 9h1M13 9h1M15 9h1', s: K }],
        zig: [{ d: 'M2 14l5-7 4 4 6-7', s: K }],
        arrow: [{ d: 'M4 14l7-7', s: K }, { d: 'M2 13h3v3H2z', f: '#fff', s: K }, { d: 'M8 5l9-2-3 9z', f: K }],
        zin: [{ d: 'M8 2a7 6 0 1 0 .1 0z', f: '#30d840', s: K }, { d: 'M5 8h7M8.500 5v6', s: K }, { d: 'M13 12l3 3', s: K, w: 2 }],
        zout: [{ d: 'M8 2a7 6 0 1 0 .1 0z', f: '#e8e040', s: K }, { d: 'M5 8h7', s: K }, { d: 'M13 12l3 3', s: K, w: 2 }],
        hlines: [{ d: 'M2 3.500h14M2 8.500h14M2 12.500h14M2 16.500h14', s: '#444' }],
        vlines: [{ d: 'M2 3v12M5 3v12M8 3v12M11 3v12M16 3v12', s: K }],
        fan: [{ d: 'M3 15L15 3M3 15l13-7M3 15h13', s: K }],
        arcs: [{ d: 'M1 14c1-11 15-11 16 0M4 14c1-7 9-7 10 0M7 14c1-4 3-4 4 0', s: K }],
        grid: [{ d: 'M2 4h14v11H2zM2 8h14M2 11h14M7 4v11M12 4v11', s: K }],
        gann: [{ d: 'M2 2v14h14M2 16L14 2M2 16l14-7M2 16L8 2', s: K }],
        note: [{ d: 'M5 3h12M5 6h12M5 9h12M7 10l-6 6', s: K }],
        bars: [{ d: 'M2 3v13M2 9h6M8 3v13M11 3v13M14 3v13M17 3v13', s: K }],
        lock: [{ d: 'M4 8h10v8H4z', f: K }, { d: 'M6 8V4c0-2 6-2 6 0', s: K, w: 2 }]
    };

    const groups = [
        [['new', 'New'], ['open', 'Open'], ['save', 'Save'], ['saveall', 'Save all'], ['|'], ['print', 'Print'], ['cut', 'Cut'], ['copy', 'Copy'], ['paste', 'Paste'], ['del', 'Delete'], ['|'], ['undo', 'Undo'], ['|'], ['back', 'Back'], ['fwd', 'Forward'], ['|'], ['info', 'Information'], ['sheet', 'Quote editor']],
        [['gear', 'Parameters'], ['gems', 'Insert'], ['glasses', 'Explore'], ['script', 'Formula'], ['hammer', 'Build'], ['wand', 'Wizard'], ['report', 'Backtest']]
    ];
    const drawTools = ['cursor', 'seg', 'ray', 'ext', 'vert', 'horiz', 'para', 'chan', 'rect', 'oval', 'abc', 'tri', 'fork', 'arc', 'cycle', 'zig', 'arrow'];
    const viewTools = ['zin', 'zout', 'i', 'h', 'd', 'w', 'm'];
    const gannTools = ['hlines', 'vlines', 'fan', 'arcs', 'grid', 'gann', 'note', 'bars'];

    const menus = ['File', 'Edit', 'View', 'Insert', 'Format', 'Symbol', 'Analysis', 'Tools', 'Window', 'Help'];
    const hotkeys = [0, 0, 0, 0, 1, 0, 0, 0, 0, 0];
    const sheets = ['ICHIMOKU', 'CODE TREND LINE  ADX', 'BB STOCH', 'EMA_TREND', 'TREN SS', 'FIBO_MONEY', 'BB_STOCK', 'MCDX', 'TREND TREND MCDX', 'BUY SELL'];

    let symbol = $state('VNINDEX');
    let interval = $state('D');
    let activeSheet = $state('MCDX');
</script>

{#snippet icon(name: string)}
    <svg class="icon" viewBox="0 0 18 18" aria-hidden="true">
        {#each icons[name] as p}
            <path d={p.d} fill={p.f ?? 'none'} stroke={p.s ?? 'none'} stroke-width={p.w ?? 1} />
        {/each}
    </svg>
{/snippet}

{#snippet tool(name: string)}
    <button class="tool" class:on={name === 'cursor' || name === 'd'} class:dim={name === 'i' || name === 'h'} aria-label={name}>
        {#if icons[name]}
            {@render icon(name)}
        {:else}
            <span class:abc={name === 'abc'}>{name}</span>
        {/if}
    </button>
{/snippet}

<div class="app">
    <header class="title">
        <svg class="logo" viewBox="0 0 18 18" aria-hidden="true">
            <path d="M9 1L1 15l8 2z" fill="#e8b020" />
            <path d="M9 1l8 14-8 2z" fill="#c01830" />
            <path d="M9 1l8 14-5-1-4-9z" fill="#2038b0" />
            <path d="M9 8l-3 6h6z" fill="#fff" />
            <path d="M9 1l8 14-8 2-8-2z" fill="none" stroke="#222" />
        </svg>
        <span>AmiBroker - [VNINDEX - VNINDEX - Daily]</span>
        <div class="window">
            <button aria-label="Minimize"><svg viewBox="0 0 10 10"><path d="M0 5.500h10" /></svg></button>
            <button aria-label="Restore"><svg viewBox="0 0 10 10"><path d="M1 3h6v6H1zM3 3V1h6v6H7" /></svg></button>
            <button aria-label="Close"><svg viewBox="0 0 10 10"><path d="M0 0l10 10M10 0L0 10" /></svg></button>
        </div>
    </header>

    <nav class="menu">
        <i class="grip"></i>
        {#each menus as name, i}
            <button>{name.slice(0, hotkeys[i])}<u>{name[hotkeys[i]]}</u>{name.slice(hotkeys[i] + 1)}</button>
        {/each}
        <div class="mdi">
            <button aria-label="Minimize chart"><svg viewBox="0 0 10 10"><path d="M2 8h6" /></svg></button>
            <button aria-label="Restore chart"><svg viewBox="0 0 10 10"><path d="M1 5h5v4H1zM3 4V1h6v5H7" /></svg></button>
            <button aria-label="Close chart"><svg viewBox="0 0 10 10"><path d="M2 2l7 7M9 2L2 9" /></svg></button>
        </div>
    </nav>

    <div class="toolbar">
        <div class="group">
            <i class="grip"></i>
            {#each groups[0] as [name, label]}
                {#if name === '|'}
                    <i class="rule"></i>
                {:else}
                    <button class="pick" aria-label={label}>{@render icon(name)}</button>
                {/if}
            {/each}
            <i class="more"></i>
        </div>
        <div class="group">
            <i class="grip"></i>
            <select class="symbol" aria-label="Symbol" bind:value={symbol}><option>VNINDEX</option></select>
            <select class="interval" aria-label="Interval" bind:value={interval}><option>D</option></select>
            <i class="more"></i>
        </div>
        <div class="group">
            <i class="grip"></i>
            {#each groups[1] as [name, label]}
                <button class="pick" aria-label={label}>{@render icon(name)}</button>
            {/each}
            <i class="more"></i>
        </div>
        <div class="group">
            <i class="grip"></i>
            <button class="pick" aria-label="Line colour">{@render icon('pen')}</button>
            <i class="drop"></i>
            <i class="rule"></i>
            {#each ['stroke', 'dotted', 'magnet'] as name}
                <button class="pick" aria-label={name}>{@render icon(name)}</button>
            {/each}
            <i class="more"></i>
        </div>
    </div>

    <main>
        <aside class="side"><button>Charts</button></aside>

        <section class="doc">
            <div class="tabs">
                <div class="tab">
                    <svg class="icon" viewBox="0 0 18 18" aria-hidden="true">
                        <path d="M2 1h10l4 4v12H2z" fill="#e8f4ff" stroke="#6a9ac0" />
                        <path d="M3 12l3-4 3 3 3-5 3 4v6H3z" fill="#2f9a50" />
                    </svg>
                    <b>VNINDEX (Daily)</b>
                    <button aria-label="Close tab">✕</button>
                </div>
                <svg class="plus" viewBox="0 0 12 12" aria-hidden="true"><path d="M4 1h4v3h3v4H8v3H4V8H1V4h3z" /></svg>
                <svg class="nav" viewBox="0 0 36 10" aria-hidden="true">
                    <path d="M6 1v8L1 5zM15 1v8l5-4z" fill="none" />
                    <path d="M27 5h8l-4 4z" class="solid" />
                </svg>
            </div>

            <div class="frame">
                <div class="pane price">
                    <svg class="plot" viewBox="{LEFT} {TOP} {WIDTH} {HEIGHT}" preserveAspectRatio="none" aria-hidden="true">
                        {#each stripes as s}
                            <rect x={s.x} y={TOP} width={s.w} height={BASE - TOP} fill={s.fill} />
                        {/each}
                        {#each prices as p}
                            <path class="dots" d="M{LEFT} {Math.round(priceY(p)) + 0.5}H{AXIS}" />
                        {/each}
                        {#each months as m}
                            <path class="dots" d="M{m.x + 0.5} {TOP}V{BASE}" />
                        {/each}
                        <path d={area(blueTop, blueTopIn)} fill="#0000ff" />
                        <path d={area(blackTop, blackTopIn)} fill="#000" />
                        <path d={area(grayTop, grayLow)} fill="#808080" />
                        <path d={area(blackLow, blueLow)} fill="#000" />
                        <path d={area(blueLow, blueLowOut)} fill="#0000ff" />
                        {#each dashed as d}
                            <path {d} class="dash" />
                        {/each}
                        {#each volume as v}
                            <rect x={v.x} y={v.y} width="1" height={BASE - v.y} fill={v.fill} />
                        {/each}
                        {#each ribbons as [fill, d]}
                            <path {d} {fill} />
                        {/each}
                        {#each trendBars as b}
                            <rect class={b.tone} x={b.x} y={b.top - b.up} width="1" height={b.h + b.up + b.down} />
                            <rect class="{b.tone} body" x={b.x - 3} y={b.top} width="6" height={b.h} />
                        {/each}
                        {#each candles as c}
                            {#if c.up}
                                <path class="up" d="M{c.x + 0.5} {c.high}V{c.top}M{c.x + 0.5} {c.bottom}V{c.low}" />
                                <rect class="up" x={c.x - 2.5} y={c.top + 0.5} width="6" height={c.bottom - c.top} />
                            {:else}
                                <rect class="down" x={c.x} y={c.high} width="1" height={Math.max(1, c.low - c.high)} />
                                <rect class="down" x={c.x - 3} y={c.top} width="7" height={c.bottom - c.top} />
                            {/if}
                        {/each}
                        <path d={line(middle)} fill="none" stroke="#111" />
                        {#each dots as p}
                            <rect x={p.x - 2} y={p.y - 2} width={p.size} height={p.size} fill={p.fill} />
                        {/each}
                        {#each stops as s}
                            <path d={line(s)} fill="none" stroke="#fff" />
                            <circle cx={s[0][0]} cy={s[0][1]} r="6" fill="#ff10ff" />
                        {/each}
                        {#each gems as [x, y]}
                            <path d="M{r(x)} {r(y - 4)}l3 4l-3 4l-3 -4z" fill="#ff10ff" />
                        {/each}
                        <path d="M{AXIS}.5 {TOP}V{LOW_TOP}M{LEFT} {BASE}.5H{AXIS}M{LEFT} {LOW_TOP - 1}.5H2527" class="axis" />
                        {#each prices as p}
                            <path d="M{AXIS} {Math.round(priceY(p)) + 0.5}h4" class="axis" />
                        {/each}
                        {#each months as m}
                            <path d="M{m.x + 0.5} {BASE}v6" class="axis" />
                        {/each}
                    </svg>

                    {#each priceLabels as p}
                        <span class="scale" style:top="{pctY(priceY(p))}%">{p.toLocaleString('en-US')}</span>
                    {/each}

                    <svg class="plot" viewBox="{LEFT} {TOP} {WIDTH} {HEIGHT}" preserveAspectRatio="none" aria-hidden="true">
                        {#each profile as row}
                            <rect x={row.x} y={row.y} width={2525 - row.x} height="3" fill="#005800" />
                        {/each}
                    </svg>

                    <p class="legend">
                        <span>VNINDEX - <i class="c-gray">BB1</i> = 1,332.70, <i class="c-gray">KHANGCU_A</i> = 1,353.36, <i class="c-pink">Win_2017(20)</i> = 1,328.05, <i class="c-red">TODAY VOLUM</i> = 1,158,822,016.00, <i class="c-green">MA V20</i> = 894,694,592.00, <i class="c-coral">MA V50</i> = 908,776,896.00</span>
                    </p>
                    <div class="quote" style:left="{pctX(619)}%">
                        <strong>1315.49</strong>
                        <small>-7.5 (-0.57%)</small>
                    </div>
                    <div class="levels" style:left="{pctX(2275)}%" style:top="{pctY(293)}%">
                        <span class="c-gray">1353</span>
                        <span>1332</span>
                        <span class="c-red">1312</span>
                    </div>
                    {#each tags as t}
                        <span class="tag {t.cls}" style:top="{pctY(t.y)}%">{t.text}</span>
                    {/each}
                    {#each months as m}
                        <span class="month" class:year={m.year} style:left="{pctX(m.x)}%">{m.name}</span>
                    {/each}
                </div>

                <div class="pane flow">
                    <svg class="plot" viewBox="{LEFT} {LOW_TOP} {WIDTH} {LOW_HEIGHT}" preserveAspectRatio="none" aria-hidden="true">
                        {#each stripes as s}
                            <rect x={s.x} y={LOW_TOP + 1} width={s.w} height={LOW_HEIGHT} fill={s.fill} />
                        {/each}
                        {#each flows as v}
                            <path class="dots" d="M{LEFT} {Math.round(flowY(v)) + 0.5}H{AXIS}" />
                        {/each}
                        {#each months as m}
                            <path class="dots" d="M{m.x + 0.5} {LOW_TOP}V1347" />
                        {/each}
                        <rect x="30" y="1074" width="2224" height="245" fill="#1a1a00" />
                        {#each columns as c}
                            <rect x={c.x - 4} y="1074" width={c.w - 1} height="244" fill="#ffff20" />
                            {#if c.green > 1075}
                                <rect x={c.x - 3} y="1075" width={c.w - 3} height={c.green - 1075} fill="#10ff10" />
                            {/if}
                            <rect x={c.x - 4} y={c.red} width={c.w} height={1319 - c.red} fill="#b00000" />
                            <rect x={c.x - 4} y={c.red} width={c.w - 1} height={1319 - c.red} fill="#ff0808" />
                        {/each}
                        <path d={longLine} fill="none" stroke="#ffc0cb" />
                        {#each shortLines as s}
                            <path d={s.d} stroke={s.stroke} stroke-width="2" />
                        {/each}
                        <path d={retail} fill="none" stroke="#102020" />
                        <path d="M{AXIS}.5 {LOW_TOP}V1347" class="axis" />
                        {#each flows as v}
                            <path d="M{AXIS} {Math.round(flowY(v)) + 0.5}h4" class="axis" />
                        {/each}
                    </svg>
                    {#each flowLabels as v}
                        <span class="scale" style:top="{pctLow(flowY(v))}%">{v}</span>
                    {/each}
                    {#each lowTags as t}
                        <span class="tag {t.cls}" style:top="{pctLow(t.y)}%">{t.text}</span>
                    {/each}
                    <p class="legend spaced">
                        <span class="c-lime">Kep_Hang = 3.7</span>
                        <span class="c-red">Tao_Lap = 4.6</span>
                        <span class="c-yellow">Dau_Co = 21.7</span>
                        <span class="c-yellow">/</span>
                        <span class="c-blue">TaoLap_Short = 5.8</span>
                        <span class="c-pink">TaoLap_Long = 5.0</span>
                    </p>
                </div>

                <div class="sheets">
                    <div class="steps">
                        <button aria-label="First sheet"><svg viewBox="0 0 12 12"><path d="M2 2v8" /><path d="M9 2v8L4 6z" class="fill" /></svg></button>
                        <button aria-label="Previous sheet"><svg viewBox="0 0 12 12"><path d="M8 2v8L3 6z" class="fill" /></svg></button>
                        <button aria-label="Next sheet"><svg class="dark" viewBox="0 0 12 12"><path d="M4 2v8l5-4z" class="fill" /></svg></button>
                        <button aria-label="Last sheet"><svg class="dark" viewBox="0 0 12 12"><path d="M3 2v8l5-4z" class="fill" /><path d="M10 2v8" /></svg></button>
                    </div>
                    {#each sheets as name}
                        <button class="sheet" class:current={name === activeSheet} onclick={() => (activeSheet = name)}>{name}</button>
                    {/each}
                    <button class="mini" aria-label="Lock">{@render icon('lock')}</button>
                    <button class="mini">▴S</button>
                    <button class="mini">▴I</button>
                    <i class="thumb"></i>
                </div>
            </div>
        </section>

        <aside class="tools">
            <div class="stack">
                <i class="bar"></i>
                {#each drawTools as name}{@render tool(name)}{/each}
                <i class="next"></i>
            </div>
            <div class="stack last">
                <i class="bar"></i>
                {#each viewTools as name}{@render tool(name)}{/each}
                <i class="next"></i>
            </div>
            <div class="stack">
                <i class="bar"></i>
                {#each gannTools as name}{@render tool(name)}{/each}
                <i class="next"></i>
            </div>
        </aside>
    </main>

    <footer>
        <span class="help">For Help, press F1</span>
        <span>X: 1/20/2025</span>
        <span>Y: 1123.369</span>
        <span>Phai Sinh &amp; Index, Group 0, Services, Advertising</span>
        <span>MyNewData</span>
        <span class="ok">OK</span>
        <span>3744M</span>
        <span class="cap">CAP</span>
    </footer>
</div>

<style>
    :global(body) {
        margin: 0;
        background: #2c3b5b;
    }
    .app {
        display: flex;
        flex-direction: column;
        height: 100vh;
        overflow: hidden;
        font: 12px/16px 'Open Sans', 'Noto Sans', sans-serif;
        color: #111;
    }
    button {
        margin: 0;
        padding: 0;
        border: 0;
        background: none;
        font: inherit;
        color: inherit;
    }
    i {
        font-style: normal;
    }
    .icon {
        display: block;
        width: 18px;
        height: 18px;
    }

    .title {
        display: flex;
        align-items: center;
        gap: 6px;
        height: 22px;
        padding-left: 2px;
        background: #f3f3f3;
        color: #7a7a7a;
    }
    .logo {
        width: 16px;
        height: 16px;
    }
    .window {
        display: flex;
        gap: 35px;
        margin-left: auto;
        padding-right: 20px;
    }
    .window svg,
    .mdi svg {
        display: block;
        width: 10px;
        height: 10px;
        fill: none;
        stroke: #888;
    }

    .menu {
        display: flex;
        align-items: center;
        gap: 14px;
        height: 26px;
        padding-left: 6px;
        background: linear-gradient(#cbd2e2, #a5b1c9);
        color: #1b2233;
    }
    .menu .grip {
        margin-right: -4px;
    }
    .mdi {
        display: flex;
        gap: 7px;
        margin-left: auto;
        padding-right: 5px;
    }
    .mdi svg {
        stroke: #222;
        stroke-width: 2px;
    }
    .grip {
        width: 2px;
        height: 15px;
        background: repeating-linear-gradient(#5c6a85 0 2px, transparent 2px 4px);
    }

    .toolbar {
        display: flex;
        gap: 4px;
        height: 27px;
        padding-left: 3px;
        background: #9ca9c1;
    }
    .group {
        display: flex;
        align-items: center;
        height: 25px;
        padding-left: 3px;
        border-radius: 2px;
        background: #bcc7d9;
    }
    .pick {
        display: grid;
        place-items: center;
        width: 22px;
        height: 24px;
    }
    .group .grip {
        margin-right: 2px;
    }
    .rule {
        width: 1px;
        height: 18px;
        margin: 0 2px;
        background: #7f8da8;
    }
    .more,
    .drop {
        width: 0;
        border: 3px solid transparent;
        border-top-color: #111;
        border-bottom: 0;
    }
    .more {
        align-self: flex-end;
        margin: 0 4px 5px;
    }
    .drop {
        margin: 0 5px;
    }
    select {
        height: 22px;
        padding: 0 4px;
        border: 0;
        border-radius: 0;
        appearance: none;
        font: inherit;
        color: #111;
        background:
            linear-gradient(#111, #111) right 4px center / 5px 2px no-repeat,
            linear-gradient(#bcc7d9, #bcc7d9) right / 13px 100% no-repeat,
            #fff;
        outline: 1px solid #a9b5cb;
    }
    .symbol {
        width: 98px;
    }
    .interval {
        width: 52px;
        margin-left: 2px;
    }

    main {
        display: flex;
        flex: 1;
        min-height: 0;
        background: #2d3e60;
    }
    .side {
        width: 28px;
        padding-top: 5px;
        box-sizing: border-box;
    }
    .side button {
        width: 19px;
        height: 46px;
        background: #43557c;
        color: #fff;
        writing-mode: vertical-rl;
    }
    .doc {
        display: flex;
        flex: 1;
        flex-direction: column;
        min-width: 0;
        padding-bottom: 5px;
    }
    .tabs {
        display: flex;
        align-items: center;
        height: 26px;
        padding-right: 3px;
        border-bottom: 2px solid #fff0c0;
        box-sizing: border-box;
        flex: none;
    }
    .tab {
        display: flex;
        align-items: center;
        align-self: flex-end;
        gap: 4px;
        height: 19px;
        padding: 0 3px;
        border-radius: 3px 3px 0 0;
        background: linear-gradient(#fffdf2, #ffe594);
    }
    .tab .icon {
        width: 15px;
        height: 15px;
    }
    .tab b {
        font-size: 12px;
    }
    .tab button {
        width: 12px;
        color: #75601c;
        font-weight: bold;
    }
    .plus {
        width: 12px;
        height: 12px;
        margin-left: 8px;
        fill: none;
        stroke: #7c8cab;
    }
    .nav {
        width: 36px;
        height: 10px;
        margin-left: auto;
        stroke: #dfe6f2;
    }
    .solid {
        fill: #dfe6f2;
        stroke: none;
    }

    .frame {
        display: flex;
        flex: 1;
        flex-direction: column;
        min-height: 0;
        border: 1px solid #fff6dd;
        border-width: 0 1px 1px 2px;
        background: #000;
    }
    .pane {
        position: relative;
        min-height: 0;
        background: #000;
        color: #fff;
        font: 12px/14px 'Liberation Sans', Arial, sans-serif;
        overflow: hidden;
    }
    .price {
        flex: 933;
    }
    .flow {
        flex: 313;
    }
    .plot {
        position: absolute;
        inset: 0;
        width: 100%;
        height: 100%;
        shape-rendering: crispEdges;
    }
    .dots {
        fill: none;
        stroke: #505050;
        stroke-dasharray: 1 2;
    }
    .dash {
        fill: none;
        stroke: #9c9c9c;
        stroke-dasharray: 3 3;
    }
    .axis {
        fill: none;
        stroke: #a0a0a0;
    }
    .up {
        fill: #000;
        stroke: #38e038;
    }
    .down {
        fill: #ff1010;
    }
    .navy {
        fill: #0808a0;
    }
    .navy.body {
        fill: #000038;
        stroke: #000090;
    }
    .pink {
        fill: #ffc0cb;
    }

    .scale {
        position: absolute;
        right: 4px;
        transform: translateY(-50%);
    }
    .tag {
        position: absolute;
        right: 0;
        width: 53px;
        height: 14px;
        padding-left: 5px;
        box-sizing: border-box;
        transform: translateY(-50%);
        white-space: nowrap;
        color: #111;
    }
    .tag.red {
        padding-left: 0;
        background: #ff1010;
        color: #7a0000;
        text-align: center;
    }
    .tag.gray {
        background: #868686;
    }
    .tag.rose {
        background: #ffc0cb;
    }
    .tag.lime {
        background: #10ff10;
        color: #064006;
    }
    .tag.yellow {
        background: #ffff20;
    }
    .tag.purple {
        background: #800080;
        color: #fff;
    }
    .tag.black {
        background: #000;
        color: #fff;
    }
    .tag.arrow {
        right: 4px;
        width: 56px;
        padding-left: 12px;
        clip-path: polygon(0 50%, 7px 0, 100% 0, 100% 100%, 7px 100%);
    }
    .month {
        position: absolute;
        bottom: 2px;
        padding-left: 3px;
    }
    .year {
        font-weight: bold;
    }
    .legend {
        position: absolute;
        top: 1px;
        left: 3px;
        margin: 0;
        white-space: nowrap;
    }
    .legend span {
        background: #000;
    }
    .spaced {
        display: flex;
        gap: 10px;
        top: 3px;
    }
    .quote {
        position: absolute;
        top: 16px;
        display: flex;
        flex-direction: column;
        font-family: 'Liberation Serif', 'Times New Roman', serif;
        font-style: italic;
        font-weight: bold;
        color: #20f020;
    }
    .quote strong {
        font-size: 40px;
        line-height: 40px;
    }
    .quote small {
        font-size: 14px;
        line-height: 20px;
    }
    .levels {
        position: absolute;
        display: flex;
        flex-direction: column;
        gap: 30px;
        width: 50px;
        height: 146px;
        padding: 15px 4px 0 0;
        box-sizing: border-box;
        background: #000;
        text-align: center;
    }
    .c-gray {
        color: #808080;
    }
    .c-pink {
        color: #ffc0cb;
    }
    .c-red {
        color: #e01818;
    }
    .c-green {
        color: #0a4a0a;
    }
    .c-coral {
        color: #ff7f60;
    }
    .c-lime {
        color: #40f040;
    }
    .c-yellow {
        color: #ffff50;
    }
    .c-blue {
        color: #1818d8;
    }

    .sheets {
        display: flex;
        height: 19px;
        flex: none;
        background: #f0f0f0;
        color: #6a6a6a;
    }
    .steps {
        display: flex;
        padding-right: 4px;
    }
    .steps button {
        width: 16px;
        border-right: 1px solid #bbb;
    }
    .steps svg {
        display: block;
        width: 12px;
        height: 12px;
        margin: auto;
        stroke: #777;
        fill: #777;
    }
    .steps .dark {
        stroke: #000;
        fill: #000;
    }
    .fill {
        stroke: none;
    }
    .sheet {
        height: 17px;
        padding: 0 6px;
        background: linear-gradient(75deg, transparent calc(100% - 5px), #777 calc(100% - 5px) calc(100% - 4px), transparent calc(100% - 4px));
        white-space: pre;
    }
    .sheet.current {
        padding: 0 13px;
        background: #000;
        clip-path: polygon(0 0, 100% 0, calc(100% - 6px) 100%, 6px 100%);
        color: #fff;
        font-weight: bold;
    }
    .mini {
        width: 17px;
        border-right: 1px solid #bbb;
        color: #000;
        font-size: 11px;
    }
    .mini .icon {
        width: 12px;
        height: 12px;
        margin: auto;
    }
    .thumb {
        align-self: center;
        width: 73px;
        height: 2px;
        margin: 0 16px 0 auto;
        background: #858585;
    }

    .tools {
        display: flex;
        flex-direction: column;
        width: 26px;
        margin-left: 6px;
        background: #9ca9c1;
    }
    .stack {
        display: flex;
        flex-direction: column;
        align-items: center;
        background: #bcc7d9;
        border-bottom: 1px solid #9ca9c1;
    }
    .stack.last {
        margin-top: auto;
    }
    .bar {
        width: 14px;
        height: 2px;
        margin: 5px 0 3px;
        background: repeating-linear-gradient(90deg, #5c6a85 0 2px, transparent 2px 4px);
    }
    .tool {
        display: grid;
        place-items: center;
        width: 22px;
        height: 22px;
        box-sizing: border-box;
        font: italic bold 14px/20px 'Liberation Serif', serif;
    }
    .tool.on {
        background: #fff3c8;
        border: 1px solid #e0c070;
    }
    .tool.dim {
        color: #7b8596;
    }
    .tool .icon {
        width: 17px;
        height: 17px;
    }
    .abc {
        font: bold 11px/20px 'DejaVu Serif', serif;
    }
    .next {
        align-self: stretch;
        height: 13px;
        background: linear-gradient(#111, #111) right 6px center / 4px 4px no-repeat, #d8dfea;
    }

    footer {
        display: flex;
        align-items: center;
        height: 20px;
        padding-left: 3px;
        background: #2a3856;
        color: #fff;
        font-size: 11px;
    }
    footer span {
        padding: 0 6px;
        border-right: 1px solid #dfe4ee;
        line-height: 15px;
    }
    footer .help {
        margin-right: auto;
        padding: 0;
        border: 0;
    }
    footer .ok {
        width: 34px;
        margin-left: 3px;
        background: #90ee90;
        color: #173017;
        text-align: center;
    }
    footer .cap {
        border: 0;
        color: #53617d;
    }
</style>
